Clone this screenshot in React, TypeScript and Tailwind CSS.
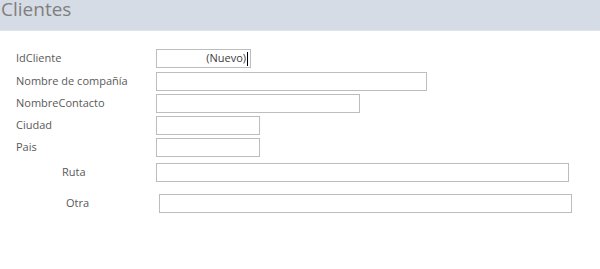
import React from "react";

const font = { fontFamily: '"Open Sans", "Noto Sans", sans-serif' };

function Box({ w, children }: { w: string; children?: React.ReactNode }) {
  return (
    <div className={`h-[19px] ${w} border border-[#bdbdbd] bg-white flex items-center justify-end pr-[2px]`}>
      {children}
    </div>
  );
}

export default function App() {
  return (
    <div className="w-[600px] h-[269px] bg-white overflow-hidden" style={font}>
      <div className="h-[31px] bg-[#d6dce5] border-b border-[#dfe4eb] flex items-start pl-[1px]">
        <span className="text-[19px] leading-[19px] text-[#7f7f7f]">Clientes</span>
      </div>
      <div className="text-[11px] text-[#595959]">
        <div className="flex items-center mt-[18px]">
          <div className="w-[156px] pl-[16px]">IdCliente</div>
          <Box w="w-[95px]">
            <span className="text-[#404040] text-[11px]">(Nuevo)</span>
            <span className="w-[1px] h-[14px] bg-black ml-[1px]" />
          </Box>
        </div>
        <div className="flex items-center mt-[4px]">
          <div className="w-[156px] pl-[16px]">Nombre de compañía</div>
          <Box w="w-[271px]" />
        </div>
        <div className="flex items-center mt-[3px]">
          <div className="w-[156px] pl-[16px]">NombreContacto</div>
          <Box w="w-[204px]" />
        </div>
        <div className="flex items-center mt-[3px]">
          <div className="w-[156px] pl-[16px]">Ciudad</div>
          <Box w="w-[104px]" />
        </div>
        <div className="flex items-center mt-[3px]">
          <div className="w-[156px] pl-[16px]">Pais</div>
          <Box w="w-[104px]" />
        </div>
        <div className="flex items-center mt-[6px]">
          <div className="w-[156px] pl-[62px]">Ruta</div>
          <Box w="w-[413px]" />
        </div>
        <div className="flex items-center mt-[12px]">
          <div className="w-[159px] pl-[66px]">Otra</div>
          <Box w="w-[413px]" />
        </div>
      </div>
    </div>
  );
}
